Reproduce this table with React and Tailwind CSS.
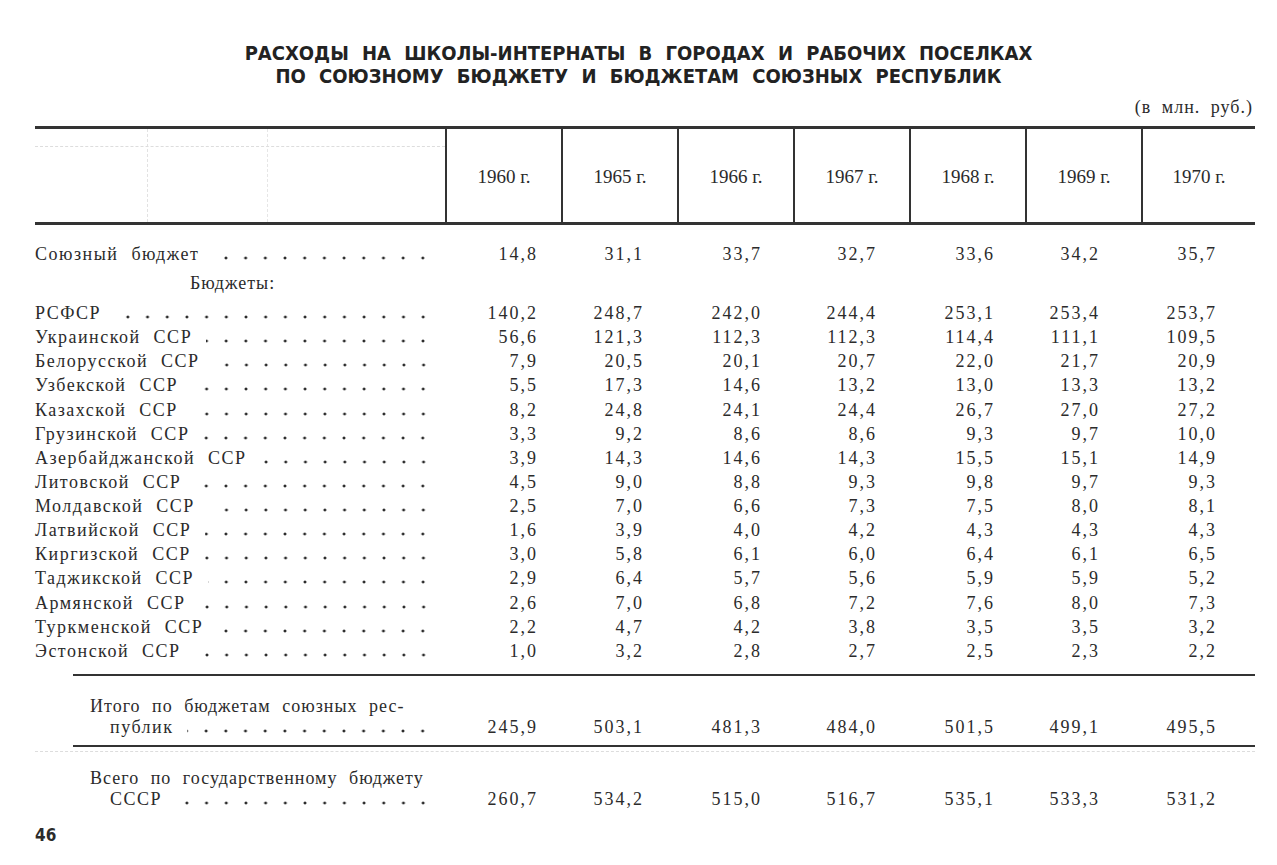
import React from "react";

const pads = ["pr-[23px]", "pr-[33px]", "pr-[31px]", "pr-[32px]", "pr-[30px]", "pr-[41px]", "pr-[38px]"];
const years = ["1960 г.", "1965 г.", "1966 г.", "1967 г.", "1968 г.", "1969 г.", "1970 г."];

const republics = [
  ["РСФСР", ["140,2", "248,7", "242,0", "244,4", "253,1", "253,4", "253,7"]],
  ["Украинской ССР", ["56,6", "121,3", "112,3", "112,3", "114,4", "111,1", "109,5"]],
  ["Белорусской ССР", ["7,9", "20,5", "20,1", "20,7", "22,0", "21,7", "20,9"]],
  ["Узбекской ССР", ["5,5", "17,3", "14,6", "13,2", "13,0", "13,3", "13,2"]],
  ["Казахской ССР", ["8,2", "24,8", "24,1", "24,4", "26,7", "27,0", "27,2"]],
  ["Грузинской ССР", ["3,3", "9,2", "8,6", "8,6", "9,3", "9,7", "10,0"]],
  ["Азербайджанской ССР", ["3,9", "14,3", "14,6", "14,3", "15,5", "15,1", "14,9"]],
  ["Литовской ССР", ["4,5", "9,0", "8,8", "9,3", "9,8", "9,7", "9,3"]],
  ["Молдавской ССР", ["2,5", "7,0", "6,6", "7,3", "7,5", "8,0", "8,1"]],
  ["Латвийской ССР", ["1,6", "3,9", "4,0", "4,2", "4,3", "4,3", "4,3"]],
  ["Киргизской ССР", ["3,0", "5,8", "6,1", "6,0", "6,4", "6,1", "6,5"]],
  ["Таджикской ССР", ["2,9", "6,4", "5,7", "5,6", "5,9", "5,9", "5,2"]],
  ["Армянской ССР", ["2,6", "7,0", "6,8", "7,2", "7,6", "8,0", "7,3"]],
  ["Туркменской ССР", ["2,2", "4,7", "4,2", "3,8", "3,5", "3,5", "3,2"]],
  ["Эстонской ССР", ["1,0", "3,2", "2,8", "2,7", "2,5", "2,3", "2,2"]],
];

const grid = "grid grid-cols-[410px_116px_116px_116px_116px_116px_116px_114px]";

// dot leaders drawn as a repeating background, tiled from the right edge
const Leader = () => (
  <span className="ml-[14px] mr-[12px] h-[4px] flex-1 bg-[radial-gradient(circle,#2b2b2b_1.3px,transparent_1.7px)] bg-[length:19.7px_4px] bg-right bg-repeat-x" />
);

const Values = ({ values }) =>
  values.map((v, i) => (
    <div key={i} className={`text-right tracking-[2px] ${pads[i]}`}>
      {v}
    </div>
  ));

const Row = ({ label, values, h = "h-[24.14px]" }) => (
  <div className={`${grid} ${h} items-center`}>
    <div className="flex items-baseline">
      <span className="whitespace-nowrap tracking-[1.5px] [word-spacing:7px]">{label}</span>
      <Leader />
    </div>
    <Values values={values} />
  </div>
);

const TwoLineRow = ({ first, second, values, className }) => (
  <div className={`${grid} items-end leading-[21px] ${className}`}>
    <div className="pl-[55px]">
      <div className="whitespace-nowrap tracking-[1px] [word-spacing:6px]">{first}</div>
      <div className="flex items-baseline pl-[20px]">
        <span className="whitespace-nowrap tracking-[1.5px]">{second}</span>
        <Leader />
      </div>
    </div>
    <Values values={values} />
  </div>
);

export default function App() {
  return (
    <div className="w-[1277px] h-[865px] overflow-hidden bg-white text-[#2b2b2b] font-['Liberation_Serif','DejaVu_Serif',serif] text-[18px]">
      <div className="pt-[42px] text-center font-['Liberation_Sans_Narrow','DejaVu_Sans_Condensed','Liberation_Sans',sans-serif] font-bold text-[20px] leading-[23px] [word-spacing:7px] text-[#222]">
        <div>РАСХОДЫ НА ШКОЛЫ-ИНТЕРНАТЫ В ГОРОДАХ И РАБОЧИХ ПОСЕЛКАХ</div>
        <div>ПО СОЮЗНОМУ БЮДЖЕТУ И БЮДЖЕТАМ СОЮЗНЫХ РЕСПУБЛИК</div>
      </div>

      <div className="mt-[9px] pr-[24px] text-right leading-[20px] tracking-[1px] [word-spacing:5px]">(в млн. руб.)</div>

      <div className="ml-[35px] mt-[9px] w-[1220px]">
        <div className="border-t-[3px] border-[#333]" />
        <div className={`${grid} h-[96px] border-b-[3px] border-[#333]`}>
          <div className="relative flex">
            <div className="absolute left-0 right-0 top-[17px] border-t border-dashed border-[#ddd]" />
            <div className="w-[113px] border-r border-dashed border-[#e2e2e2]" />
            <div className="w-[120px] border-r border-dashed border-[#e6e6e6]" />
          </div>
          {years.map((y) => (
            <div key={y} className="flex items-center justify-center border-l-2 border-[#333] pt-[4px] text-[19px]">
              {y}
            </div>
          ))}
        </div>

        <div className="pt-[16px]">
          <Row
            label="Союзный бюджет"
            values={["14,8", "31,1", "33,7", "32,7", "33,6", "34,2", "35,7"]}
            h="h-[24px]"
          />
          <div className="mt-[6px] h-[24px] pl-[155px] leading-[24px] tracking-[1px]">Бюджеты:</div>
          <div className="mt-[5px]">
            {republics.map(([label, values]) => (
              <Row key={label} label={label} values={values} />
            ))}
          </div>
        </div>

        <div className="ml-[38px] mt-[12px] border-t-2 border-[#333]" />
        <TwoLineRow
          className="pt-[20px]"
          first="Итого по бюджетам союзных рес-"
          second="публик"
          values={["245,9", "503,1", "481,3", "484,0", "501,5", "499,1", "495,5"]}
        />
        <div className="ml-[38px] mt-[7px] border-t-2 border-[#333]" />
        <div className="mt-[4px] border-t border-dashed border-[#ddd]" />
        <TwoLineRow
          className="pt-[16px]"
          first="Всего по государственному бюджету"
          second="СССР"
          values={["260,7", "534,2", "515,0", "516,7", "535,1", "533,3", "531,2"]}
        />
      </div>

      <div className="ml-[35px] mt-[15px] font-['Liberation_Sans_Narrow','DejaVu_Sans_Condensed',sans-serif] font-bold text-[17px] leading-[20px]">
        46
      </div>
    </div>
  );
}
